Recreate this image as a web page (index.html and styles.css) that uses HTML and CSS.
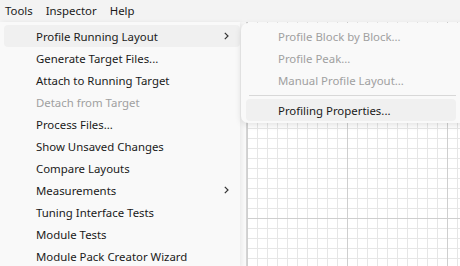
FILE: index.html
```html
<!DOCTYPE html>
<html lang="en">
<head>
    <meta charset="UTF-8">
    <title>Tools Menu</title>
    <link rel="stylesheet" href="styles.css">
</head>
<body>
    <div class="menubar">
        <span class="menubar-item">Tools</span>
        <span class="menubar-item">Inspector</span>
        <span class="menubar-item">Help</span>
    </div>

    <div class="workspace">
        <div class="menu">
            <div class="menu-item active">
                <span>Profile Running Layout</span>
                <svg class="chevron" width="5" height="8" viewBox="0 0 5 8"><polyline points="0.8,0.8 4,4 0.8,7.2"/></svg>
            </div>
            <div class="menu-item">Generate Target Files...</div>
            <div class="menu-item">Attach to Running Target</div>
            <div class="menu-item disabled">Detach from Target</div>
            <div class="menu-item">Process Files...</div>
            <div class="menu-item">Show Unsaved Changes</div>
            <div class="menu-item">Compare Layouts</div>
            <div class="menu-item">
                <span>Measurements</span>
                <svg class="chevron" width="5" height="8" viewBox="0 0 5 8"><polyline points="0.8,0.8 4,4 0.8,7.2"/></svg>
            </div>
            <div class="menu-item">Tuning Interface Tests</div>
            <div class="menu-item">Module Tests</div>
            <div class="menu-item">Module Pack Creator Wizard</div>
        </div>

        <div class="canvas">
            <div class="grid"></div>
        </div>

        <div class="submenu">
            <div class="menu-item disabled">Profile Block by Block...</div>
            <div class="menu-item disabled">Profile Peak...</div>
            <div class="menu-item disabled">Manual Profile Layout...</div>
            <div class="separator"></div>
            <div class="menu-item active">Profiling Properties...</div>
        </div>
    </div>
</body>
</html>
```

FILE: styles.css
```css
* {
    margin: 0;
    padding: 0;
    box-sizing: border-box;
}

html, body {
    height: 100%;
    overflow: hidden;
}

body {
    font-family: "Noto Sans", "Open Sans", sans-serif;
    font-size: 11.4px;
    color: #1a1a1a;
    background-color: #f9f9f9;
    display: flex;
    flex-direction: column;
}

.menubar {
    height: 22px;
    display: flex;
    align-items: center;
    gap: 13px;
    padding-left: 5px;
    background-color: #f3f3f3;
}

.menubar-item {
    line-height: 22px;
}

.workspace {
    position: relative;
    flex: 1;
    display: flex;
}

.menu {
    width: 240px;
    padding-top: 3px;
    background-color: #f9f9f9;
    box-shadow: 2px 0 4px rgba(0, 0, 0, 0.06);
    z-index: 1;
}

.menu-item {
    height: 22px;
    display: flex;
    align-items: center;
    justify-content: space-between;
    padding-left: 32px;
    padding-right: 11px;
    margin-left: 4px;
    border-radius: 4px;
    white-space: nowrap;
}

.menu-item.active {
    background-color: #f0f0f0;
}

.menu-item.disabled {
    color: #a0a0a0;
}

.chevron {
    fill: none;
    stroke: #333;
    stroke-width: 1.2;
}

.canvas {
    flex: 1;
    padding-left: 6px;
}

.grid {
    height: 100%;
    border-left: 1px solid #d4d4d4;
    background-color: #fff;
    background-image:
        linear-gradient(to right, #cfcfcf 1px, transparent 1px),
        linear-gradient(to bottom, #cfcfcf 1px, transparent 1px),
        linear-gradient(to right, #e6e6e6 1px, transparent 1px),
        linear-gradient(to bottom, #e6e6e6 1px, transparent 1px);
    background-size: 100px 100px, 100px 100px, 10px 10px, 10px 10px;
    background-position: 0 -4px, 0 -4px, 0 -4px, 0 -4px;
}

.submenu {
    position: absolute;
    left: 241px;
    top: 1px;
    width: 230px;
    padding-top: 2px;
    padding-bottom: 2px;
    background-color: #f9f9f9;
    border-radius: 7px;
    box-shadow: 0 2px 6px rgba(0, 0, 0, 0.12);
    z-index: 2;
}

.submenu .menu-item {
    margin-left: 5px;
    margin-right: 15px;
    padding-left: 32px;
}

.separator {
    height: 1px;
    margin: 4px 15px 3px 8px;
    background-color: #d8d8d8;
}
```
